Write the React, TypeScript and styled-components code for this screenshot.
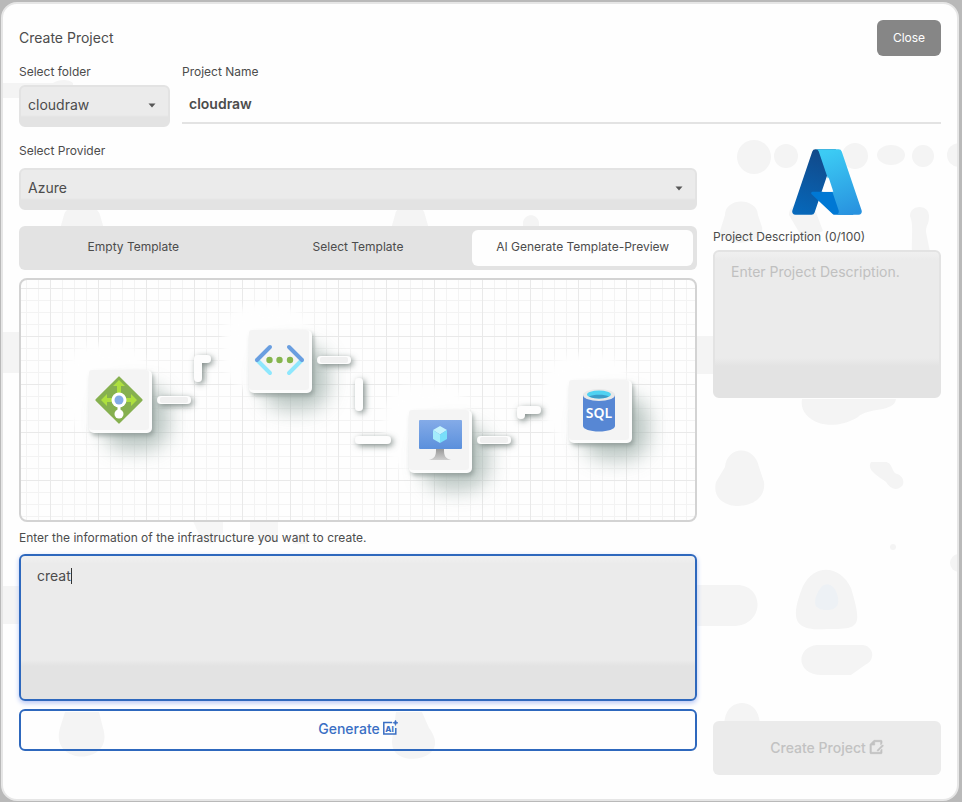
import React, { useState } from "react";
import styled, { createGlobalStyle, css } from "styled-components";
import { RiFileEditLine } from "react-icons/ri";

const GlobalStyle = createGlobalStyle`
  *, *::before, *::after { box-sizing: border-box; }
  body {
    margin: 0;
    background: #b9b9b9;
    color: #4c4c4c;
    font-family: Inter, "Liberation Sans", sans-serif;
    font-size: 12px;
    font-weight: 400;
  }
  button, input, select, textarea { font: inherit; color: inherit; margin: 0; }
`;

const Overlay = styled.div`
  min-height: 100vh;
  padding: 2px 3px 1px 1px;
  display: flex;
`;

const Dialog = styled.main`
  position: relative;
  isolation: isolate;
  flex: 1;
  display: flex;
  flex-direction: column;
  padding: 16px 16px 24px;
  border: 2px solid #e6e6e6;
  border-radius: 16px;
  background: #fefefe;
`;

const Ghosts = styled.svg`
  position: absolute;
  inset: 0;
  width: 100%;
  height: 100%;
  z-index: -1;
  fill: #f4f4f4;
  border-radius: 14px;
`;

const Header = styled.header`
  display: flex;
  justify-content: space-between;
  align-items: center;
`;

const Title = styled.h1`
  margin: 0;
  font-size: 14px;
  line-height: 20px;
  font-weight: 400;
`;

const CloseButton = styled.button`
  min-width: 64px;
  height: 36px;
  padding: 0 8px 2px;
  border: 0;
  border-radius: 6px;
  background: #868686;
  color: #fff;
`;

const NameRow = styled.div`
  display: grid;
  grid-template-columns: 151px 1fr;
  gap: 12px;
  margin-top: 8px;
`;

const Field = styled.div<{ $gap?: number }>`
  display: flex;
  flex-direction: column;
  gap: ${(p) => p.$gap ?? 5}px;
`;

const Label = styled.label`
  line-height: 16px;
`;

const SelectBox = styled.div`
  position: relative;
  display: flex;
`;

const Select = styled.select`
  appearance: none;
  flex: 1;
  height: 42px;
  padding: 0 32px 4px 7px;
  border: 2px solid #e3e3e3;
  border-radius: 6px;
  background: linear-gradient(#ebebeb 28px, #e3e3e3 30px);
  font-size: 14px;
`;

const Caret = styled.svg`
  position: absolute;
  right: 14px;
  top: 18px;
  width: 8px;
  height: 5px;
  fill: #565656;
  pointer-events: none;
`;

const NameInput = styled.input`
  height: 39px;
  width: 100%;
  padding: 0 7px;
  border: 0;
  border-bottom: 2px solid #e3e3e3;
  background: transparent;
  font-size: 14px;
  font-weight: 600;
  outline: 0;
`;

const Columns = styled.div`
  flex: 1;
  display: grid;
  grid-template-columns: minmax(0, 1fr) 228px;
  gap: 16px;
  margin-top: 16px;
`;

const Main = styled.section`
  display: flex;
  flex-direction: column;
`;

const Side = styled.aside`
  display: flex;
  flex-direction: column;
`;

const Tabs = styled.div`
  display: grid;
  grid-template-columns: repeat(3, 1fr);
  gap: 4px;
  margin-top: 16px;
  padding: 4px;
  border-radius: 6px;
  background: #e3e3e3;
`;

const Tab = styled.button<{ $active: boolean }>`
  height: 36px;
  padding: 0 0 4px;
  border: 0;
  border-radius: 6px;
  background: ${(p) => (p.$active ? "#fefefe" : "transparent")};
`;

const Canvas = styled.div`
  height: 244px;
  margin: 8px 0;
  overflow: hidden;
  border: 2px solid #d3d3d3;
  border-radius: 8px;
  background-color: #fefefe;
  background-image:
    linear-gradient(90deg, #e9e9e9 1px, transparent 1px),
    linear-gradient(#e9e9e9 1px, transparent 1px),
    linear-gradient(90deg, #f3f3f3 1px, transparent 1px),
    linear-gradient(#f3f3f3 1px, transparent 1px);
  background-size: 48px 48px, 48px 48px, 12px 12px, 12px 12px;
  background-position: 29px 8px;
`;

const Diagram = styled.svg`
  display: block;
  width: 100%;
  height: 240px;
`;

const area = css`
  resize: none;
  display: block;
  width: 100%;
  border: 2px solid #e3e3e3;
  border-radius: 6px;
  font-size: 14px;
  line-height: 20px;
  padding: 10px 16px;
  outline: 0;
`;

const Description = styled.textarea`
  ${area}
  height: 148px;
  background: linear-gradient(#f0f0f0, #ebebeb 8px, #ebebeb 106px, #e3e3e3 114px);
  &::placeholder { color: #c0c0c0; opacity: 1; }
`;

const PromptBox = styled.div`
  position: relative;
`;

const Prompt = styled.textarea`
  ${area}
  height: 147px;
  border-color: #2e68bd;
  background: linear-gradient(#f0f0f0, #ebebeb 8px, #ebebeb 104px, #e3e3e3 110px);
  box-shadow: 0 2px 5px #b4c4f4;
  caret-color: transparent;
`;

const PromptMirror = styled.div`
  ${area}
  position: absolute;
  inset: 0;
  border-color: transparent;
  color: transparent;
  white-space: pre-wrap;
  pointer-events: none;
  user-select: none;

  &::after {
    content: "";
    display: inline-block;
    width: 1px;
    height: 16px;
    vertical-align: -3px;
    background: #333;
  }
`;

const GenerateButton = styled.button`
  display: flex;
  align-items: center;
  justify-content: center;
  gap: 2px;
  height: 42px;
  margin-top: 8px;
  padding: 0 0 4px;
  border: 2px solid #2e68bd;
  border-radius: 6px;
  background: transparent;
  color: #3a6fc4;
  font-size: 14px;
  font-weight: 500;
`;

const CreateButton = styled.button`
  display: flex;
  align-items: center;
  justify-content: center;
  gap: 2px;
  height: 54px;
  margin-top: auto;
  padding: 0 0 2px;
  border: 0;
  border-radius: 6px;
  background: #ebebeb;
  color: #c2c2c2;
  font-size: 14px;
  font-weight: 500;

  svg { stroke: currentColor; stroke-width: 1; }
`;

const Logo = styled.svg`
  width: 76px;
  height: 76px;
  margin: 1px auto 9px;
`;

const DropArrow = () => (
  <Caret viewBox="0 0 8 5" aria-hidden="true">
    <path d="M0.5 0.5h7L4 4.5z" />
  </Caret>
);

const AiIcon = () => (
  <svg width="16" height="16" viewBox="0 0 16 16" aria-hidden="true">
    <path d="M10 2.500H1.800v11.500h12V8" fill="none" stroke="currentColor" strokeWidth="1.500" />
    <path d="M13.500 0l.8 2 2 .8-2 .8-.8 2-.8-2-2-.8 2-.8z" fill="currentColor" stroke="currentColor" strokeWidth=".5" />
    <text x="7.500" y="11.500" textAnchor="middle" fontSize="8" fontWeight="800" fill="currentColor">AI</text>
  </svg>
);

const AzureLogo = () => (
  <Logo viewBox="0 0 96 96" role="img" aria-label="Azure">
    <defs>
      <linearGradient id="azA" x1="-1032.17" x2="-1059.21" y1="145.31" y2="65.43" gradientTransform="matrix(1 0 0 -1 1075 158)" gradientUnits="userSpaceOnUse">
        <stop offset="0" stopColor="#114a8b" />
        <stop offset="1" stopColor="#0669bc" />
      </linearGradient>
      <linearGradient id="azB" x1="-1027.16" x2="-997.48" y1="147.64" y2="68.56" gradientTransform="matrix(1 0 0 -1 1075 158)" gradientUnits="userSpaceOnUse">
        <stop offset="0" stopColor="#3ccbf4" />
        <stop offset="1" stopColor="#2892df" />
      </linearGradient>
    </defs>
    <path fill="url(#azA)" d="M33.338 6.544h26.038l-27.03 80.087a4.152 4.152 0 0 1-3.933 2.824H8.149a4.145 4.145 0 0 1-3.928-5.47L29.404 9.368a4.152 4.152 0 0 1 3.934-2.825z" />
    <path fill="#0078d4" d="M71.175 60.261h-41.29a1.911 1.911 0 0 0-1.305 3.309l26.532 24.764a4.171 4.171 0 0 0 2.846 1.121h23.38z" />
    <path fill="url(#azB)" d="M66.595 9.364a4.145 4.145 0 0 0-3.928-2.82H33.648a4.146 4.146 0 0 1 3.928 2.82l25.184 74.62a4.146 4.146 0 0 1-3.928 5.472h29.02a4.146 4.146 0 0 0 3.927-5.472z" />
    <path fill="#fefefe" d="M50 42l6 18.300H42.500z" />
  </Logo>
);

const nodes = [
  { x: 67, y: 90 },
  { x: 227, y: 50 },
  { x: 387, y: 130 },
  { x: 547, y: 100 },
];

const links = [
  "M139 120h26",
  "M185 79h-9v19",
  "M299 80h26",
  "M337 102v25",
  "M337 160h28",
  "M459 160h26",
  "M515 130h-16v5",
];

const Pipeline = () => (
  <Diagram viewBox="0 0 672 240" role="img" aria-label="Infrastructure preview">
    <defs>
      <filter id="soft" x="-100%" y="-100%" width="300%" height="300%">
        <feGaussianBlur stdDeviation="10" />
      </filter>
      <filter id="halo" x="-100%" y="-100%" width="300%" height="300%">
        <feGaussianBlur stdDeviation="5" />
      </filter>
      <filter id="small" filterUnits="userSpaceOnUse" x="-10" y="-10" width="700" height="260">
        <feDropShadow dx="2" dy="3" stdDeviation="2" floodColor="#7f8a87" floodOpacity=".6" />
      </filter>
      <filter id="pipe" filterUnits="userSpaceOnUse" x="-10" y="-10" width="700" height="260">
        <feDropShadow dx="2" dy="2" stdDeviation="3" floodColor="#6f7d79" floodOpacity=".9" />
      </filter>
      <linearGradient id="screen" x2="0" y2="1">
        <stop offset="0" stopColor="#84abe8" />
        <stop offset="1" stopColor="#5b90dc" />
      </linearGradient>
      <linearGradient id="stand" x2="0" y2="1">
        <stop offset="0" stopColor="#999" />
        <stop offset="1" stopColor="#d0d0d0" />
      </linearGradient>
    </defs>
    {nodes.map((n) => (
      <g key={n.x} transform={`translate(${n.x} ${n.y})`}>
        <rect x="-24" y="-24" width="84" height="84" rx="32" fill="#fefefe" filter="url(#halo)" />
        <rect x="-22" y="-22" width="78" height="78" rx="28" fill="#fefefe" filter="url(#halo)" />
        <rect x="14" y="16" width="66" height="64" rx="24" fill="#a9b8b3" opacity=".8" filter="url(#soft)" />
      </g>
    ))}
    {links.map((d) => (
      <path key={d} d={d} fill="none" stroke="#fdfdfd" strokeWidth="8" strokeLinecap="round" strokeLinejoin="round" filter="url(#pipe)" />
    ))}
    {[[138, 117], [298, 77], [458, 157]].map(([x, y]) => (
      <rect key={x} x={x} y={y} width="28" height="6" rx="2" fill="#f0f0f0" />
    ))}
    {nodes.map((n) => (
      <g key={n.x} transform={`translate(${n.x} ${n.y})`}>
        <rect width="63" height="63" rx="5" fill="#fcfcfc" filter="url(#small)" />
        <rect width="60" height="60" rx="3" fill="#f4f4f4" />
      </g>
    ))}
    <g transform="translate(67 90)">
      <rect x="13" y="13" width="34" height="34" rx="1" fill="#86b04f" transform="rotate(45 30 30)" />
      <path fill="#aee03f" d="M30 10l6 6h-4v8h-4v-8h-4zM12 30l6-6v4h7v4h-7v4zM48 30l-6-6v4h-7v4h7v4z" />
      <path d="M30 30v14" stroke="#fff" strokeWidth="3" />
      <circle cx="30" cy="44" r="4.500" fill="#fff" />
      <circle cx="30" cy="30" r="7.500" fill="#fff" />
      <circle cx="30" cy="30" r="4.500" fill="#83abe6" />
    </g>
    <g transform="translate(227 50)" fill="none" strokeWidth="4" strokeLinecap="round">
      <path stroke="#8ee7fd" d="M8 30l13 13M53 30l-13 13" />
      <path stroke="#699ee0" d="M21 17L8 30M40 17l13 13" />
      <g fill="#86b54e" stroke="none">
        <circle cx="20.500" cy="30" r="3.200" />
        <circle cx="30.500" cy="30" r="3.200" />
        <circle cx="41" cy="30" r="3.200" />
      </g>
    </g>
    <g transform="translate(387 130)">
      <rect x="10" y="10" width="43" height="29" rx="1" fill="url(#screen)" />
      <path fill="url(#stand)" d="M27 39h8c0 7 1 9 7 11H20c6-2 7-4 7-11z" />
      <path fill="#c5f3fd" d="M31 16l7 4-7 4.500-7-4.500z" />
      <path fill="#a4ecfc" d="M24 20l7 4.500V33l-7-4z" />
      <path fill="#78dffa" d="M38 20l-7 4.500V33l7-4z" />
    </g>
    <g transform="translate(547 100)">
      <path fill="#5787d4" d="M14 15v31c0 3 7 5.500 16 5.500s16-2.500 16-5.500V15z" />
      <ellipse cx="30" cy="15" rx="16" ry="6" fill="#e8e8e8" />
      <ellipse cx="30" cy="14.500" rx="12" ry="4" fill="#4fd2f2" />
      <path fill="#3c9cc9" d="M20 16.500c4-2.500 16-2.500 20 0-4 2.500-16 2.500-20 0z" />
      <text x="30" y="38" textAnchor="middle" fill="#fff" fontFamily="'Noto Sans', sans-serif" fontSize="14" fontWeight="600">SQL</text>
    </g>
  </Diagram>
);

const Backdrop = () => (
  <Ghosts aria-hidden="true">
    <path d="M0 79h50c6-4 16-4 20 0v15H0zM0 328h18v41H0zM0 582h18v38H0zM690 332h24v38h-24z" />
    <path d="M61 211c2-12 34-12 36 0l4 14H57zM392 211c2-14 28-14 30 0l4 14h-38zM520 218c2-9 14-9 16 0v6h-16z" />
    <path d="M62 708h34l4 16c12 38-54 38-43 0zM393 708h26l7 16c18 24-8 34-24 30-14-4-14-14-12-24z" />
    <circle cx="751" cy="153" r="17" />
    <circle cx="783" cy="152" r="12" />
    <circle cx="852" cy="152" r="13" />
    <ellipse cx="888" cy="151" rx="14" ry="10" />
    <circle cx="920" cy="152" r="11" />
    <circle cx="956" cy="151" r="12" />
    <path d="M722 211c0-18 32-18 33 0l4 12c4 18-42 22-42 4zM786 211c0-16 24-16 28 0l6 16-20 8zM907 212c0-12 19-12 19 0 0 10-3 8-3 16l4 20h-18c-1-14 2-26-2-36z" />
    <path d="M802 395h91c-2 14-28 8-38 18-30 18-60 2-56-18z" />
    <path d="M722 463c2-22 30-22 34 0l5 15c4 32-56 32-48 0zM868 458h14c8 0 6 10 12 12 6 2 8 8 5 12-6 6-12 2-16-4-8-6-20-12-15-20z" />
    <path d="M692 581h42c28 0 28 41-4 41h-38zM800 582c12-24 38-20 48 2 12 40 8 41-24 41-32 2-38-8-24-43zM814 641h46c12 2 12 16 2 20l-14 10h-26c-30 2-30-28-8-30zM722 714c4-20 30-20 34 0l2 10h-38z" />
    <path d="M190 517h30v12l-10 10h-10zM247 517h28v20h-28zM290 530h14v10h-14z" opacity=".8" />
    <circle cx="890" cy="543" r="3" />
    <circle cx="956" cy="559" r="9" />
    <path fill="#edf1f5" d="M814 590c6-14 16-12 20 0 4 12-2 16-10 16-10 0-15-4-10-16z" />
  </Ghosts>
);

const tabNames = ["Empty Template", "Select Template", "AI Generate Template-Preview"];

export default function App() {
  const [tab, setTab] = useState(2);
  const [text, setText] = useState("creat");
  const [description, setDescription] = useState("");

  return (
    <Overlay>
      <GlobalStyle />
      <Dialog>
        <Backdrop />
        <Header>
          <Title>Create Project</Title>
          <CloseButton type="button">Close</CloseButton>
        </Header>
        <NameRow>
          <Field>
            <Label htmlFor="folder">Select folder</Label>
            <SelectBox>
              <Select id="folder" defaultValue="cloudraw">
                <option>cloudraw</option>
              </Select>
              <DropArrow />
            </SelectBox>
          </Field>
          <Field>
            <Label htmlFor="name">Project Name</Label>
            <NameInput id="name" defaultValue="cloudraw" />
          </Field>
        </NameRow>
        <Columns>
          <Main>
            <Field $gap={9}>
              <Label htmlFor="provider">Select Provider</Label>
              <SelectBox>
                <Select id="provider" defaultValue="Azure">
                  <option>Azure</option>
                </Select>
                <DropArrow />
              </SelectBox>
            </Field>
            <Tabs role="tablist">
              {tabNames.map((name, i) => (
                <Tab key={name} type="button" role="tab" aria-selected={tab === i} $active={tab === i} onClick={() => setTab(i)}>
                  {name}
                </Tab>
              ))}
            </Tabs>
            <Canvas>
              <Pipeline />
            </Canvas>
            <Field $gap={8}>
              <Label htmlFor="prompt">Enter the information of the infrastructure you want to create.</Label>
              <PromptBox>
                <Prompt id="prompt" autoFocus value={text} onChange={(e) => setText(e.target.value)} />
                <PromptMirror aria-hidden="true">{text}</PromptMirror>
              </PromptBox>
            </Field>
            <GenerateButton type="button">
              Generate
              <AiIcon />
            </GenerateButton>
          </Main>
          <Side>
            <AzureLogo />
            <Field $gap={5}>
              <Label htmlFor="description">Project Description ({description.length}/100)</Label>
              <Description
                id="description"
                maxLength={100}
                placeholder="Enter Project Description."
                value={description}
                onChange={(e) => setDescription(e.target.value)}
              />
            </Field>
            <CreateButton type="button" disabled>
              Create Project
              <RiFileEditLine size={16} />
            </CreateButton>
          </Side>
        </Columns>
      </Dialog>
    </Overlay>
  );
}
